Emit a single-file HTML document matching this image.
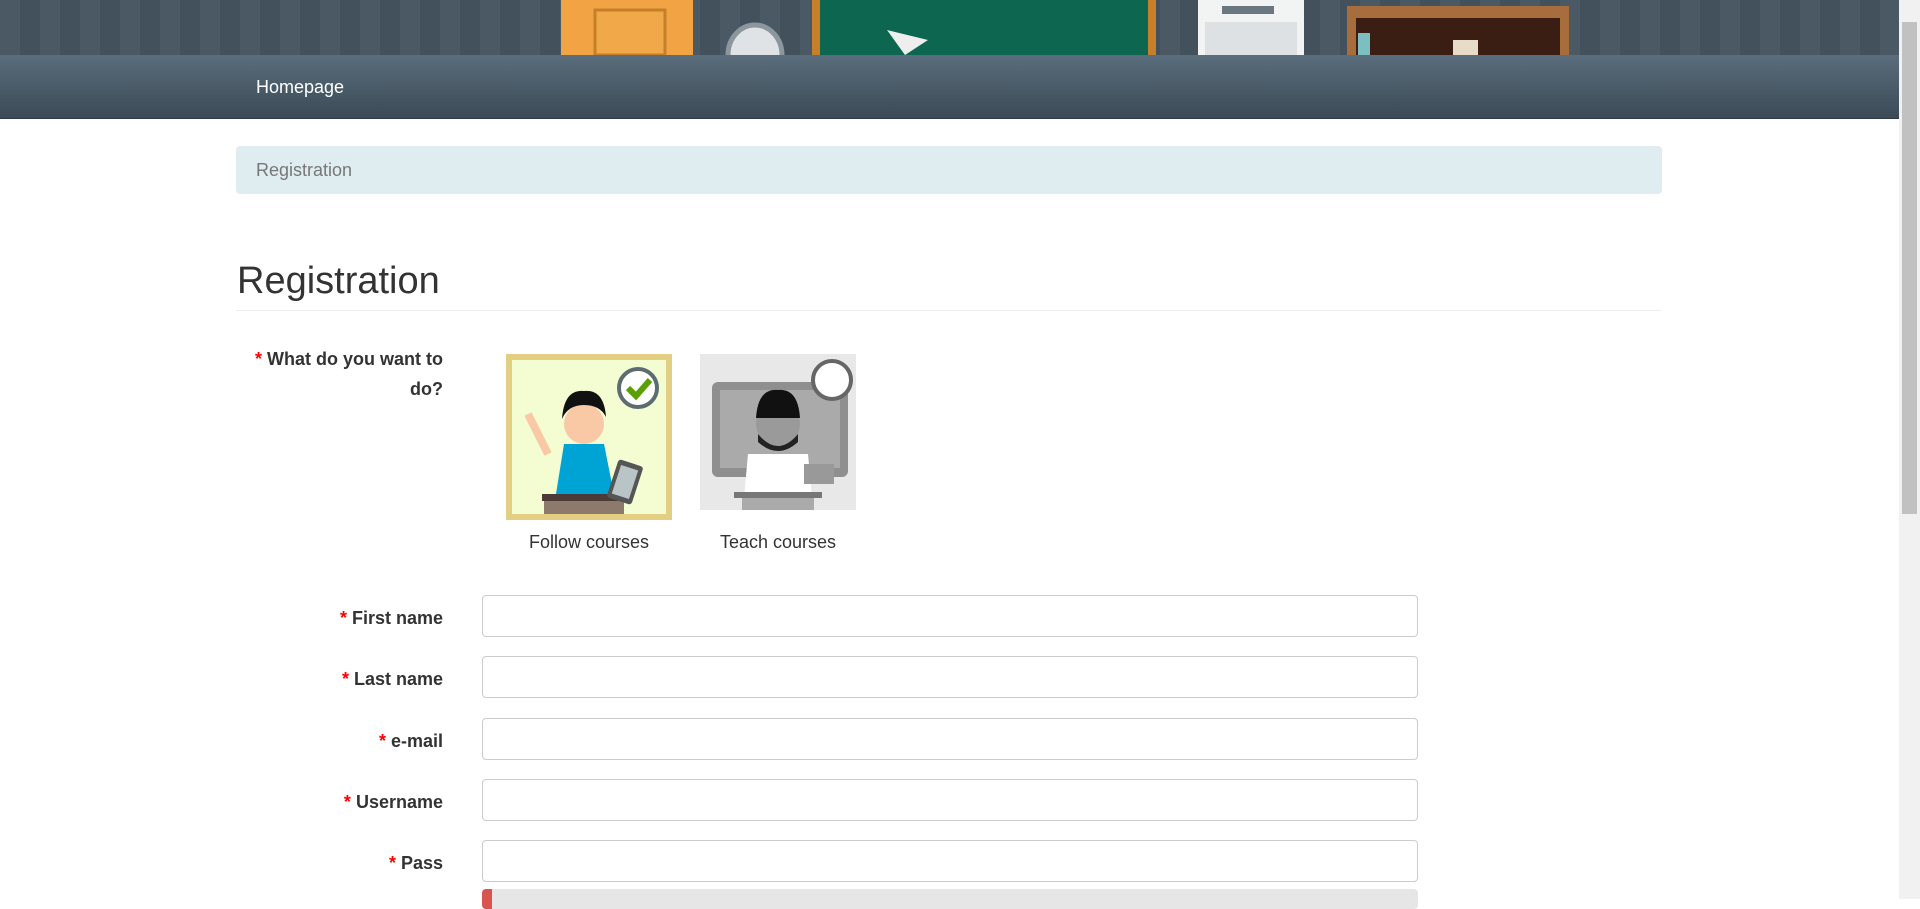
<!DOCTYPE html>
<html><head><meta charset="utf-8"><style>
*{box-sizing:border-box}
body{margin:0;width:1920px;height:899px;overflow:hidden;background:#fff;font-family:"Liberation Sans",sans-serif;color:#333;position:relative}
.top{position:absolute;left:0;top:0;width:1899px;height:55px;background:repeating-linear-gradient(90deg,#4a5964 0 20px,#42515b 20px 40px);overflow:hidden}
.nav{position:absolute;left:0;top:55px;width:1899px;height:64px;background:linear-gradient(#5a6d7c,#3b4a56);border-bottom:1px solid #2e3a44}
.nav span{position:absolute;left:256px;top:22px;color:#fff;font-size:18px}
.sb{position:absolute;right:0;top:0;width:21px;height:899px;background:#f1f1f1}
.sb div{position:absolute;left:3px;top:22px;width:15px;height:492px;background:#c1c1c1}
.bc{position:absolute;left:236px;top:146px;width:1426px;height:48px;background:#dfedf0;border-radius:4px;color:#777;font-size:18px;padding:14px 20px}
h1{position:absolute;left:237px;top:260px;margin:0;font-weight:normal;font-size:38px;color:#333}
.hr{position:absolute;left:236px;top:310px;width:1426px;height:1px;background:#eee}
.lbl{position:absolute;right:1477px;font-weight:bold;font-size:18px;text-align:right;line-height:30px}
.lbl b{color:red}
.in{position:absolute;left:482px;width:936px;height:42px;border:1px solid #ccc;border-radius:4px}
.cap{position:absolute;top:532px;font-size:18px;color:#333;text-align:center}
</style></head><body>
<div class="top">
<svg width="1899" height="55">
<rect x="561" y="0" width="132" height="55" fill="#f2a444"/><rect x="595" y="10" width="70" height="45" fill="#f0a848" stroke="#c57f28" stroke-width="3"/>
<ellipse cx="755" cy="55" rx="27" ry="30" fill="#dfe3e5" stroke="#8c979d" stroke-width="5"/>
<rect x="812" y="0" width="344" height="55" fill="#c77f2a"/><rect x="820" y="0" width="328" height="55" fill="#0d6650"/>
<polygon points="887,30 928,40 905,55" fill="#eee"/>
<rect x="1198" y="0" width="106" height="55" fill="#f2f3f3"/><rect x="1205" y="22" width="92" height="33" fill="#dde1e3"/><rect x="1222" y="6" width="52" height="8" fill="#6b7780"/>
<rect x="1347" y="6" width="222" height="49" fill="#a86d3c"/><rect x="1356" y="18" width="204" height="37" fill="#3a1e14"/>
<rect x="1358" y="33" width="12" height="22" fill="#7bbfc2"/><rect x="1453" y="40" width="25" height="15" fill="#e8dcc8"/>
</svg></div>
<div class="nav"><span>Homepage</span></div>
<div class="sb"><div></div></div>
<div class="bc">Registration</div>
<h1>Registration</h1>
<div class="hr"></div>
<div class="lbl" style="top:344px"><b>*</b> What do you want to<br>do?</div>
<svg style="position:absolute;left:506px;top:354px" width="166" height="166">
<rect x="0" y="0" width="166" height="166" fill="#e3cf82"/><rect x="6" y="6" width="154" height="154" fill="#f4fdd2"/>
<rect x="38" y="145" width="80" height="15" fill="#8e7a6c"/><rect x="36" y="140" width="86" height="7" fill="#4b3a35"/>
<path d="M58 90 h40 l10 50 h-58z" fill="#00a4d4"/>
<circle cx="78" cy="70" r="20" fill="#f8c9a4"/><path d="M56 65 q2-30 22-28 q20 -2 22 26 q-6-12 -22-12 q-16 0-22 14z" fill="#111"/>
<path d="M22 60 l20 40" stroke="#f8c9a4" stroke-width="8"/>
<rect x="106" y="108" width="26" height="40" rx="3" fill="#555" transform="rotate(18 119 128)"/><rect x="110" y="113" width="18" height="30" fill="#b9c4c6" transform="rotate(18 119 128)"/>
<circle cx="132" cy="34" r="19" fill="#fff" stroke="#5d6c71" stroke-width="4"/><path d="M122 34 l8 8 l14-16" stroke="#5aa000" stroke-width="6" fill="none"/>
</svg>
<svg style="position:absolute;left:700px;top:354px" width="156" height="156">
<rect width="156" height="156" fill="#e8e8e8"/><rect x="12" y="28" width="136" height="95" rx="6" fill="#8f8f8f"/><rect x="20" y="36" width="120" height="78" fill="#aaa"/>
<path d="M48 100 h60 l4 44 h-68z" fill="#fff"/><rect x="34" y="138" width="88" height="6" fill="#777"/><rect x="42" y="144" width="72" height="12" fill="#aaa"/>
<circle cx="78" cy="70" r="22" fill="#9a9a9a"/><path d="M56 64 q2-30 22-28 q20-2 22 28z" fill="#111"/><path d="M58 80 q20 24 40 0 v8 q-20 18-40 0z" fill="#222"/>
<rect x="104" y="110" width="30" height="20" fill="#999"/>
<circle cx="132" cy="26" r="19" fill="#fff" stroke="#666" stroke-width="4"/>
</svg>
<div class="cap" style="left:506px;width:166px">Follow courses</div>
<div class="cap" style="left:700px;width:156px">Teach courses</div>
<div class="lbl" style="top:603px"><b>*</b> First name</div><div class="in" style="top:595px"></div>
<div class="lbl" style="top:664px"><b>*</b> Last name</div><div class="in" style="top:656px"></div>
<div class="lbl" style="top:726px"><b>*</b> e-mail</div><div class="in" style="top:718px"></div>
<div class="lbl" style="top:787px"><b>*</b> Username</div><div class="in" style="top:779px"></div>
<div class="lbl" style="top:848px"><b>*</b> Pass</div><div class="in" style="top:840px"></div>
<div style="position:absolute;left:482px;top:889px;width:936px;height:20px;background:#e6e6e6;border-radius:4px;overflow:hidden"><div style="width:10px;height:20px;background:#d9534f"></div></div>
</body></html>
